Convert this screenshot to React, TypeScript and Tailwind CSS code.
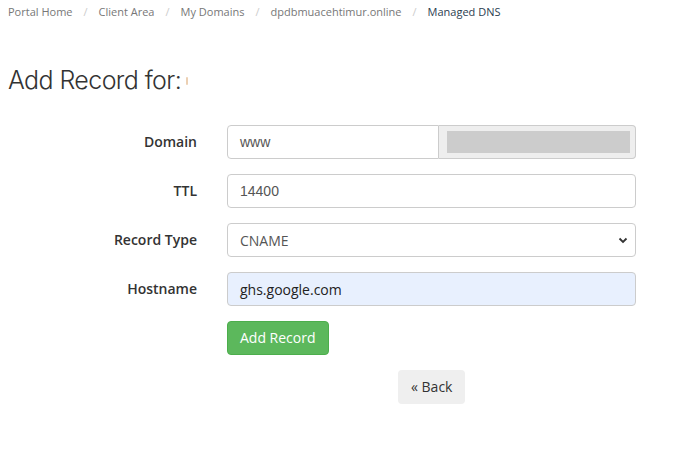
import React from "react";

const crumbs = ["Portal Home", "Client Area", "My Domains", "dpdbmuacehtimur.online"];

function Row({ label, children }: { label: string; children: React.ReactNode }) {
  return (
    <div className="flex items-center h-[34px]">
      <div className="w-[197px] text-right text-[14px] font-semibold text-[#333] font-['Open_Sans',sans-serif] -mt-[1px]">{label}</div>
      <div className="ml-[30px] w-[409px] h-[34px]">{children}</div>
    </div>
  );
}

export default function App() {
  return (
    <div className="w-[700px] h-[465px] bg-white overflow-hidden font-['Open_Sans',sans-serif] text-[#333]">
      <div className="flex items-center pl-[8px] pt-[4px] h-[20px] text-[11px]">
        {crumbs.map((c) => (
          <React.Fragment key={c}>
            <span className="text-[#777]">{c}</span>
            <span className="text-[#ccc] px-[11px]">/</span>
          </React.Fragment>
        ))}
        <span className="text-[#2c3e50]">Managed DNS</span>
      </div>
      <div className="mt-[45px] pl-[8px] h-[32px] flex items-center">
        <span className="font-['Inter',sans-serif] font-light text-[25px] text-[#333] tracking-[-0.6px]">Add Record for:</span>
        <span className="ml-[5px] w-[2px] h-[8px] bg-[#e0b080] rounded-full opacity-60" />
      </div>
      <div className="mt-[28px] flex flex-col gap-[15px]">
        <Row label="Domain">
          <div className="flex h-full">
            <div className="flex-1 border border-[#ccc] rounded-l-[4px] flex items-center pl-[12px] text-[14px] text-[#555] font-['Liberation_Sans',sans-serif]">www</div>
            <div className="w-[197px] border border-l-0 border-[#ccc] rounded-r-[4px] bg-[#eee] flex items-center pl-[8px] pr-[5px]">
              <div className="h-[22px] w-full bg-[#ccc]" />
            </div>
          </div>
        </Row>
        <Row label="TTL">
          <div className="h-full border border-[#ccc] rounded-[4px] flex items-center pl-[12px] text-[14px] text-[#555] font-['Liberation_Sans',sans-serif]">14400</div>
        </Row>
        <Row label="Record Type">
          <div className="h-full border border-[#ccc] rounded-[4px] flex items-center pl-[12px] pr-[6px] text-[14px] text-[#555]">
            <span className="flex-1">CNAME</span>
            <svg width="10" height="10" viewBox="0 0 10 10" className="mr-[1px]">
              <path d="M1.5 3.5 L5 7 L8.5 3.5" fill="none" stroke="#333" strokeWidth="1.8" />
            </svg>
          </div>
        </Row>
        <Row label="Hostname">
          <div className="h-full border border-[#ccc] rounded-[4px] bg-[#e8f0fe] flex items-center pl-[12px] text-[14px] text-[#222]">ghs.google.com</div>
        </Row>
        <div className="flex">
          <div className="ml-[227px] h-[34px] px-[12px] pb-[2px] flex items-center bg-[#5cb85c] border border-[#4cae4c] rounded-[4px] text-white text-[14px]">Add Record</div>
        </div>
      </div>
      <div className="mt-[15px] flex">
        <div className="ml-[398px] h-[34px] px-[13px] pb-[2px] flex items-center bg-[#efefef] rounded-[4px] text-[14px] text-[#333]">« Back</div>
      </div>
    </div>
  );
}
